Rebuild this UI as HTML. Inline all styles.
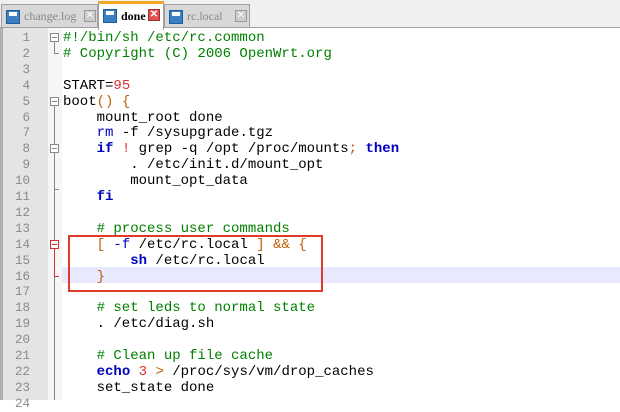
<!DOCTYPE html>
<html><head><style>
body{margin:0;width:620px;height:400px;overflow:hidden;background:#fff;font-family:"Liberation Mono",monospace;}
#tabs{position:absolute;left:0;top:0;width:620px;height:27px;background:#f0f0f0;border-bottom:1px solid #a0a0a0;}
.tab{position:absolute;top:4px;height:22px;background:#d8d8d8;border:1px solid #a0a0a0;border-bottom:none;font-size:12px;font-family:"Liberation Serif",serif;color:#888;line-height:22px;}
.tab.act{top:1px;height:26px;background:#fff;border-top:3px solid #f5a623;color:#000;font-weight:bold;line-height:24px;}
.ic{position:absolute;left:4px;top:5px;width:12px;height:12px;background:#3b7fc4;border:1px solid #1f5a99;}
.ic:after{content:"";position:absolute;left:2px;top:1px;width:8px;height:4px;background:#fff}
.x{position:absolute;top:5px;width:10px;height:10px;border:1px solid #999;background:#ccc;color:#fff;font-size:10px;line-height:10px;text-align:center;font-family:"Liberation Sans",sans-serif}
#ln{position:absolute;left:0;top:28px;width:45px;height:372px;background:#e4e4e4;border-left:3px solid #b0b0b0;}
#fm{position:absolute;left:48px;top:28px;width:14px;height:372px;background:#f6f6f6;}
.l{position:absolute;left:0;width:620px;height:16px;font-size:14px;line-height:16px;white-space:pre;}
.n{position:absolute;left:0;width:30px;text-align:right;color:#8a8a8a;font-size:12.5px}
.t{position:absolute;left:63px;color:#000}
.c{color:#008000}.k{color:#0000c0;font-weight:bold}.o{color:#c06000}.num{color:#e03030}
</style></head><body>
<div id="tabs">
<div class="tab" style="left:1px;width:95px"><span class="ic"></span><span style="position:absolute;left:22px">change.log</span><span class="x" style="left:82px">✕</span></div>
<div class="tab act" style="left:98px;width:64px"><span class="ic"></span><span style="position:absolute;left:22px">done</span><span class="x" style="left:49px;background:#e05050;border-color:#a03030">✕</span></div>
<div class="tab" style="left:164px;width:84px"><span class="ic"></span><span style="position:absolute;left:22px">rc.local</span><span class="x" style="left:70px">✕</span></div>
</div>
<div id="ln"></div><div id="fm"></div>
<div style="position:absolute;left:62px;top:267px;width:558px;height:16px;background:#e8e8ff"></div>
<svg style="position:absolute;left:48px;top:30px" width="14" height="370">
<g fill="none" stroke="#888" stroke-width="1">
<rect x="2.5" y="3.5" width="8" height="8" fill="#fff"/><line x1="4" y1="7.5" x2="9" y2="7.5"/>
<line x1="6.5" y1="11.5" x2="6.5" y2="24"/><line x1="6.5" y1="23.5" x2="11" y2="23.5"/>
<rect x="2.5" y="67.5" width="8" height="8" fill="#fff"/><line x1="4" y1="71.5" x2="9" y2="71.5"/>
<line x1="6.5" y1="75.5" x2="6.5" y2="372"/>
<rect x="2.5" y="114.5" width="8" height="8" fill="#fff"/><line x1="4" y1="118.5" x2="9" y2="118.5"/>
<line x1="6.5" y1="159.5" x2="11" y2="159.5"/>
</g>
<g fill="none" stroke="#d03030" stroke-width="1">
<rect x="2.5" y="210.5" width="8" height="8" fill="#fff"/><line x1="4" y1="214.5" x2="9" y2="214.5"/>
<line x1="6.5" y1="218.5" x2="6.5" y2="247"/><line x1="6.5" y1="246.5" x2="11" y2="246.5"/>
</g></svg>
<div id="code" style="position:absolute;left:0;top:30px">
<div class="l" style="top:0"><span class="n">1</span><span class="t c">#!/bin/sh /etc/rc.common</span></div>
<div class="l" style="top:15.9px"><span class="n">2</span><span class="t c"># Copyright (C) 2006 OpenWrt.org</span></div>
<div class="l" style="top:31.8px"><span class="n">3</span></div>
<div class="l" style="top:47.7px"><span class="n">4</span><span class="t">START=<span class="num">95</span></span></div>
<div class="l" style="top:63.6px"><span class="n">5</span><span class="t">boot<span class="o">() {</span></span></div>
<div class="l" style="top:79.5px"><span class="n">6</span><span class="t">    mount_root done</span></div>
<div class="l" style="top:95.4px"><span class="n">7</span><span class="t">    <span class="k" style="font-weight:normal">rm</span> -f /sysupgrade.tgz</span></div>
<div class="l" style="top:111.3px"><span class="n">8</span><span class="t">    <span class="k">if</span> <span class="num">!</span> grep -q /opt /proc/mounts<span class="o">;</span> <span class="k">then</span></span></div>
<div class="l" style="top:127.2px"><span class="n">9</span><span class="t">        . /etc/init.d/mount_opt</span></div>
<div class="l" style="top:143.1px"><span class="n">10</span><span class="t">        mount_opt_data</span></div>
<div class="l" style="top:159px"><span class="n">11</span><span class="t">    <span class="k">fi</span></span></div>
<div class="l" style="top:174.9px"><span class="n">12</span></div>
<div class="l" style="top:190.8px"><span class="n">13</span><span class="t c">    # process user commands</span></div>
<div class="l" style="top:206.7px"><span class="n">14</span><span class="t">    <span class="o">[</span> <span class="k" style="font-weight:normal">-f</span> /etc/rc.local <span class="o">] &amp;&amp; {</span></span></div>
<div class="l" style="top:222.6px"><span class="n">15</span><span class="t">        <span class="k">sh</span> /etc/rc.local</span></div>
<div class="l" style="top:238.5px"><span class="n">16</span><span class="t">    <span class="o">}</span></span></div>
<div class="l" style="top:254.4px"><span class="n">17</span></div>
<div class="l" style="top:270.3px"><span class="n">18</span><span class="t c">    # set leds to normal state</span></div>
<div class="l" style="top:286.2px"><span class="n">19</span><span class="t">    . /etc/diag.sh</span></div>
<div class="l" style="top:302.1px"><span class="n">20</span></div>
<div class="l" style="top:318px"><span class="n">21</span><span class="t c">    # Clean up file cache</span></div>
<div class="l" style="top:333.9px"><span class="n">22</span><span class="t">    <span class="k">echo</span> <span class="num">3</span> <span class="o">&gt;</span> /proc/sys/vm/drop_caches</span></div>
<div class="l" style="top:349.8px"><span class="n">23</span><span class="t">    set_state done</span></div>
<div class="l" style="top:365.7px"><span class="n">24</span></div>
</div>
<div style="position:absolute;left:68px;top:235px;width:251px;height:53px;border:2px solid #e03a2a"></div>
</body></html>
